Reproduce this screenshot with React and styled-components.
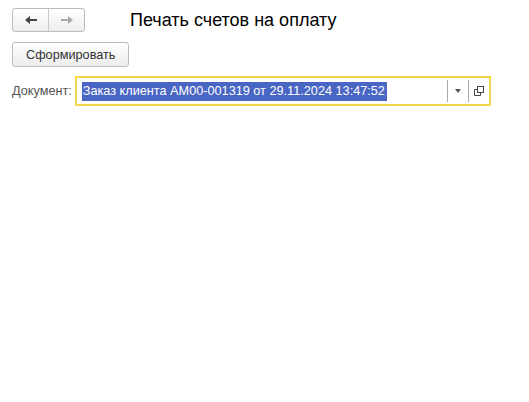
import React from 'react'
import styled, { createGlobalStyle } from 'styled-components'

const Global = createGlobalStyle`
  body { margin: 0; background: #fff; font-family: "Liberation Sans", Arial, sans-serif; font-size: 12.7px; color: #333; }
`

const Page = styled.div`
  padding: 8px 12px;
  display: flex;
  flex-direction: column;
`

const Header = styled.div`
  display: flex;
  align-items: center;
  height: 24px;
`

const NavGroup = styled.div`
  display: flex;
  width: 73px;
  height: 24px;
  border: 1px solid #bbb;
  border-radius: 3px;
  background: linear-gradient(#fff, #ededed);
  box-sizing: border-box;
`

const NavButton = styled.div`
  flex: 1;
  display: flex;
  align-items: center;
  justify-content: center;
  border-left: ${p => (p.$divider ? '1px solid #ccc' : 'none')};
`

const Title = styled.div`
  margin-left: 45px;
  font-size: 18px;
  color: #000;
  margin-top: 1px;
`

const Button = styled.div`
  margin-top: 10px;
  align-self: flex-start;
  height: 25px;
  padding: 0 13px;
  display: flex;
  align-items: center;
  border: 1px solid #bbb;
  border-radius: 3px;
  background: linear-gradient(#fff, #ececec);
  box-sizing: border-box;
  color: #333;
`

const Row = styled.div`
  margin-top: 9px;
  display: flex;
  align-items: center;
`

const Label = styled.span`
  color: #555;
  margin-right: 3px;
`

const Field = styled.div`
  width: 416px;
  height: 30px;
  box-sizing: border-box;
  border: 2px solid #f1d84b;
  display: flex;
  align-items: center;
  padding-left: 5px;
`

const Selected = styled.span`
  background: #4a66c4;
  color: #fff;
  padding: 2px 2px 3px 1px;
  flex: none;
`

const Spacer = styled.div`
  flex: 1;
`

const Tool = styled.div`
  width: 20px;
  height: 22px;
  border-left: 1px solid #aaa;
  display: flex;
  align-items: center;
  justify-content: center;
`

export default function App() {
  return (
    <Page>
      <Global />
      <Header>
        <NavGroup>
          <NavButton>
            <svg width="14" height="10" viewBox="0 0 14 10"><path d="M1 5 L6 1 V4 H13 V6 H6 V9 Z" fill="#444" /></svg>
          </NavButton>
          <NavButton $divider>
            <svg width="14" height="10" viewBox="0 0 14 10"><path d="M13 5 L8 1 V4 H1 V6 H8 V9 Z" fill="#aaa" /></svg>
          </NavButton>
        </NavGroup>
        <Title>Печать счетов на оплату</Title>
      </Header>
      <Button>Сформировать</Button>
      <Row>
        <Label>Документ:</Label>
        <Field>
          <Selected>Заказ клиента АМ00-001319 от 29.11.2024 13:47:52</Selected>
          <Spacer />
          <Tool>
            <svg width="6" height="4" viewBox="0 0 6 4"><path d="M0 0 H6 L3 4 Z" fill="#555" /></svg>
          </Tool>
          <Tool>
            <svg width="10" height="10" viewBox="0 0 10 10" fill="none" stroke="#444" strokeWidth="1">
              <rect x="3.5" y="0.5" width="6" height="6" />
              <path d="M3.5 3.5 H0.5 V9.5 H6.5 V6.5" />
            </svg>
          </Tool>
        </Field>
      </Row>
    </Page>
  )
}
